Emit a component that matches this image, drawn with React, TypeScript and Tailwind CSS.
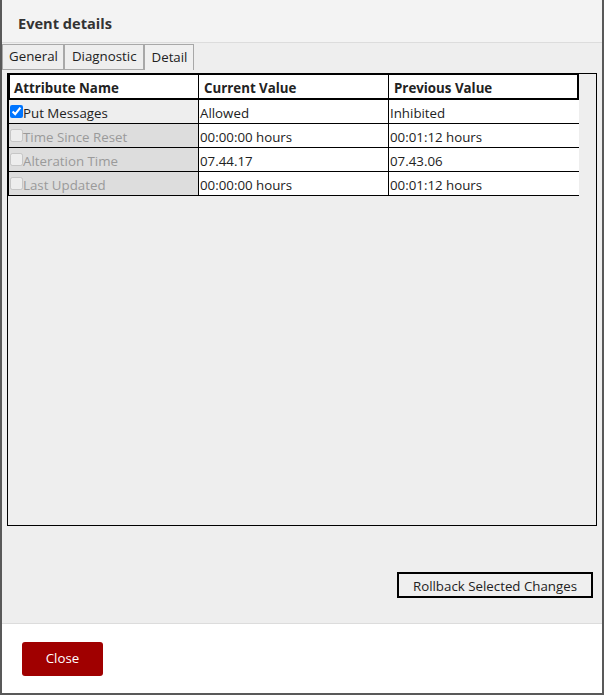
import React from "react";

const rows = [
  { name: "Put Messages", cur: "Allowed", prev: "Inhibited", checked: true, disabled: false },
  { name: "Time Since Reset", cur: "00:00:00 hours", prev: "00:01:12 hours", checked: false, disabled: true },
  { name: "Alteration Time", cur: "07.44.17", prev: "07.43.06", checked: false, disabled: true },
  { name: "Last Updated", cur: "00:00:00 hours", prev: "00:01:12 hours", checked: false, disabled: true },
];

export default function App() {
  return (
    <div
      className="w-[604px] h-[695px] flex flex-col border-x-2 border-b-2 border-[#595959] bg-[#eeeeee] text-[13.3px] text-[#222]"
      style={{ fontFamily: '"Open Sans", "Noto Sans", sans-serif' }}
    >
      <div className="h-[43px] shrink-0 bg-[#f3f3f3] border-b border-[#dcdcdc] flex items-center pl-[16px] pt-[5px]">
        <span className="font-bold text-[14.6px] text-[#333]">Event details</span>
      </div>
      <div className="flex-1 flex flex-col pt-px">
        <div className="flex h-[26px]">
          <div className="border border-[#a8a8a8] pl-[6px] pr-[5px] flex items-center leading-none">General</div>
          <div className="border border-[#a8a8a8] pl-[7px] pr-[6px] flex items-center leading-none">Diagnostic</div>
          <div className="border border-b-0 border-[#a8a8a8] pl-[7px] pr-[6px] flex items-center leading-none bg-[#f0f0f0] pt-px">Detail</div>
        </div>
        <div className="mx-[5px] mt-[3px] h-[453px] border border-black flex flex-col">
          <div className="w-[571px] flex h-[27px] border-2 border-black bg-white font-bold -mt-px">
            <div className="w-[189px] border-r border-black flex items-center pl-[4px] pt-[5px]">Attribute Name</div>
            <div className="w-[190px] border-r border-black flex items-center pl-[5px] pt-[5px]">Current Value</div>
            <div className="flex-1 flex items-center pl-[5px] pt-[5px]">Previous Value</div>
          </div>
          {rows.map((r) => (
            <div key={r.name} className="w-[571px] flex h-[24px] border-b border-l border-black">
              <div
                className={
                  "w-[190px] border-r border-black flex items-center " +
                  (r.disabled ? "bg-[#dddddd] text-[#9a9a9a]" : "bg-[#eeeeee]")
                }
              >
                <input
                  type="checkbox"
                  checked={r.checked}
                  disabled={r.disabled}
                  readOnly
                  className="m-0 ml-px w-[13px] h-[13px]"
                />
                <span className="pt-[4px]">{r.name}</span>
              </div>
              <div className="w-[190px] border-r border-black bg-white flex items-center pl-px pt-[4px]">{r.cur}</div>
              <div className="flex-1 bg-white flex items-center pl-px pt-[4px]">{r.prev}</div>
            </div>
          ))}
        </div>
        <div className="flex justify-end pr-[9px] mt-[46px]">
          <button className="w-[196px] h-[26px] border-2 border-black bg-[#efefef] flex items-center justify-center text-[#222] pt-[3px]">
            Rollback Selected Changes
          </button>
        </div>
      </div>
      <div className="h-[70px] shrink-0 bg-white border-t border-[#dcdcdc] flex items-center pl-[20px]">
        <button className="w-[81px] h-[34px] rounded-[3px] bg-[#a00000] text-white flex items-center justify-center">
          Close
        </button>
      </div>
    </div>
  );
}
